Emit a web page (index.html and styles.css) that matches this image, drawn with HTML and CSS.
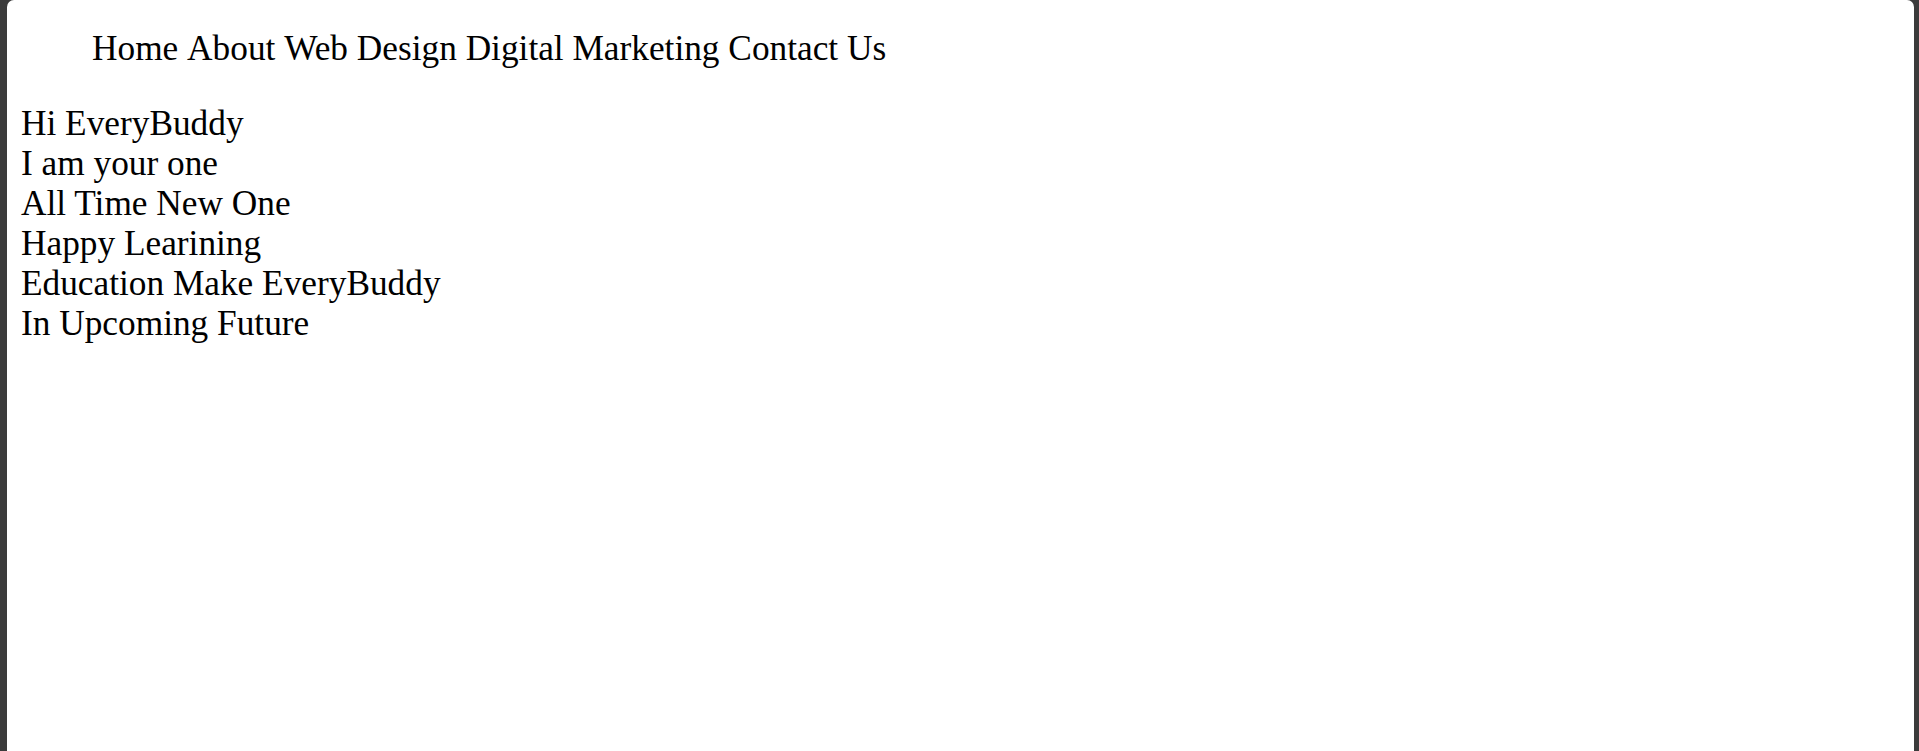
FILE: index.html
```html
<!DOCTYPE html>
<html lang="en">
<head>
<meta charset="utf-8">
<title>EveryBuddy</title>
<link rel="stylesheet" href="styles.css">
</head>
<body>
<div class="page">
  <nav class="nav">
    <ul class="nav-list">
      <li class="nav-item">Home</li>
      <li class="nav-item">About</li>
      <li class="nav-item">Web Design</li>
      <li class="nav-item">Digital Marketing</li>
      <li class="nav-item">Contact Us</li>
    </ul>
  </nav>
  <div class="content">
    <div class="line">Hi EveryBuddy</div>
    <div class="line">I am your one</div>
    <div class="line">All Time New One</div>
    <div class="line">Happy Learining</div>
    <div class="line">Education Make EveryBuddy</div>
    <div class="line">In Upcoming Future</div>
  </div>
</div>
</body>
</html>
```
FILE: styles.css
```css
html, body {
  margin: 0;
  padding: 0;
  height: 100%;
  background: #3b3b3b;
}

.page {
  box-sizing: border-box;
  margin: 0 5px 0 7px;
  min-height: 751px;
  background: #ffffff;
  border-radius: 7px 7px 0 0;
  padding: 29px 14px 0 14px;
  font-family: "Liberation Serif", "Times New Roman", serif;
  font-size: 35.3px;
  line-height: 40px;
  color: #000;
}

.nav-list {
  list-style: none;
  margin: 0;
  padding: 0 0 0 71px;
}

.nav-item {
  display: inline;
}

.content {
  margin-top: 35px;
}
```
